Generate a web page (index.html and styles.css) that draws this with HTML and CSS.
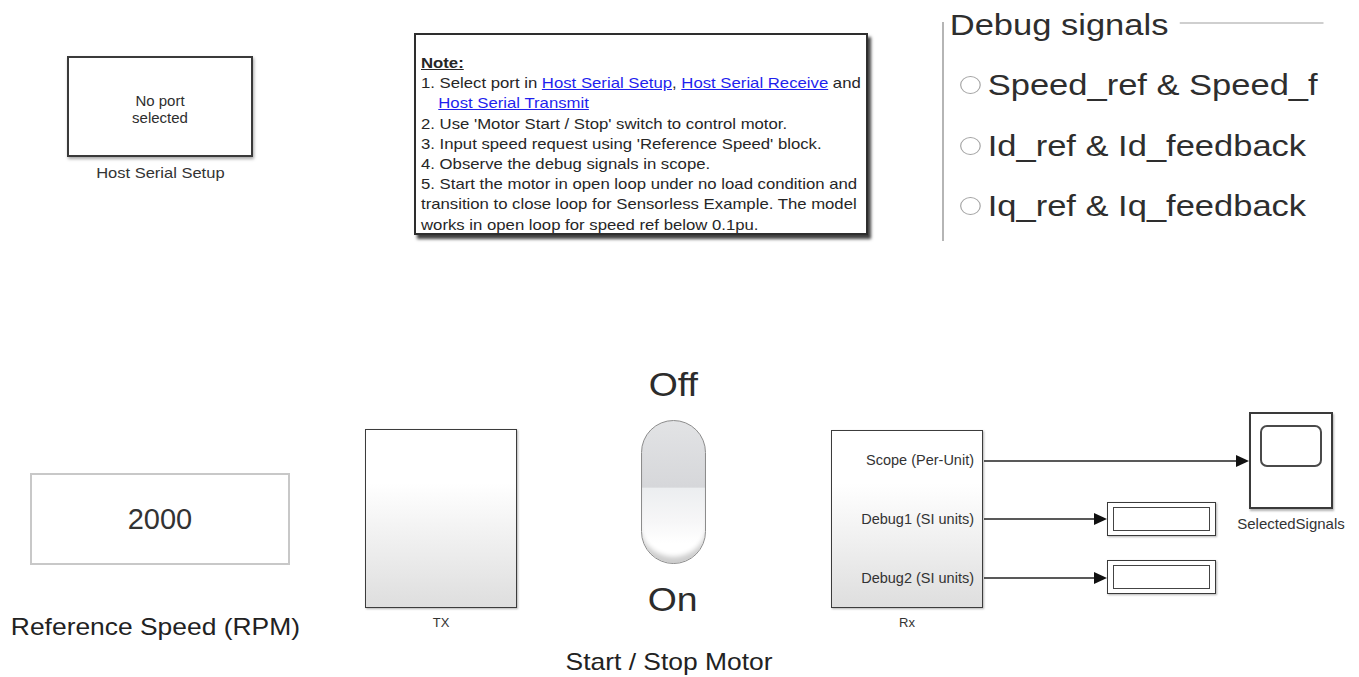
FILE: index.html
```html
<!DOCTYPE html>
<html>
<head>
<meta charset="utf-8">
<title>Host Serial Model</title>
<link rel="stylesheet" href="styles.css">
</head>
<body>
<div class="canvas">

  <div class="node node-hss">
    <div class="block hss-block">
      <div class="hss-text">No port<br>selected</div>
    </div>
    <div class="label lbl-hss"><span class="sx">Host Serial Setup</span></div>
  </div>

  <div class="note">
    <div class="note-text">
      <div class="note-title">Note:</div>
      <div>1. Select port in <a class="lnk">Host Serial Setup</a>, <a class="lnk">Host Serial Receive</a> and</div>
      <div class="indent"><a class="lnk">Host Serial Transmit</a></div>
      <div>2. Use 'Motor Start / Stop' switch to control motor.</div>
      <div>3. Input speed request using 'Reference Speed' block.</div>
      <div>4. Observe the debug signals in scope.</div>
      <div>5. Start the motor in open loop under no load condition and</div>
      <div>transition to close loop for Sensorless Example. The model</div>
      <div>works in open loop for speed ref below 0.1pu.</div>
    </div>
  </div>

  <div class="debug">
    <div class="debug-inner">
      <div class="legend">
        <span class="legend-text">Debug signals</span>
        <span class="legend-line"></span>
      </div>
      <div class="radio first"><span class="radio-dot"></span><span>Speed_ref &amp; Speed_f</span></div>
      <div class="radio"><span class="radio-dot"></span><span>Id_ref &amp; Id_feedback</span></div>
      <div class="radio"><span class="radio-dot"></span><span>Iq_ref &amp; Iq_feedback</span></div>
    </div>
  </div>

  <div class="node node-ref">
    <div class="ref-box"><span class="ref-value">2000</span></div>
    <div class="label lbl-ref"><span class="sx">Reference Speed (RPM)</span></div>
  </div>

  <div class="node node-tx">
    <div class="block sub-block tx-block"></div>
    <div class="label lbl-small">TX</div>
  </div>

  <div class="node node-switch">
    <div class="label lbl-big"><span class="sx">Off</span></div>
    <div class="toggle"></div>
    <div class="label lbl-big lbl-on"><span class="sx">On</span></div>
    <div class="label lbl-start"><span class="sx">Start / Stop Motor</span></div>
  </div>

  <div class="node node-rx">
    <div class="block sub-block rx-block">
      <div class="port">Scope (Per-Unit)</div>
      <div class="port">Debug1 (SI units)</div>
      <div class="port">Debug2 (SI units)</div>
    </div>
    <div class="label lbl-small">Rx</div>
  </div>

  <div class="node node-scope">
    <div class="block scope-block">
      <div class="scope-screen"></div>
    </div>
    <div class="label lbl-scope">SelectedSignals</div>
  </div>

  <div class="display display-1"><div class="display-inner"></div></div>
  <div class="display display-2"><div class="display-inner"></div></div>

  <svg class="wires" width="1359" height="677" viewBox="0 0 1359 677">
    <g stroke="#222" stroke-width="1.3" fill="none">
      <line x1="984" y1="461" x2="1238" y2="461"/>
      <line x1="984" y1="519" x2="1096" y2="519"/>
      <line x1="984" y1="578" x2="1096" y2="578"/>
    </g>
    <g fill="#111">
      <polygon points="1236,455 1249,461 1236,467"/>
      <polygon points="1094,513 1107,519 1094,525"/>
      <polygon points="1094,572 1107,578 1094,584"/>
    </g>
  </svg>

</div>
</body>
</html>
```

FILE: styles.css
```css
html, body {
  margin: 0;
  padding: 0;
  background: #fff;
}

body {
  font-family: "Liberation Sans", Arial, Helvetica, sans-serif;
  color: #2a2a2a;
}

.canvas {
  position: relative;
  width: 1359px;
  height: 677px;
  overflow: hidden;
  background: #fff;
}

/* generic diagram node: block + label stacked */
.node {
  position: absolute;
  display: flex;
  flex-direction: column;
  align-items: center;
}

.label {
  white-space: nowrap;
  line-height: 1;
  color: #333;
}

.sx {
  display: inline-block;
  transform: scaleX(1.1);
  transform-origin: 50% 50%;
}

.block {
  box-sizing: border-box;
  width: 100%;
}

/* Host Serial Setup */
.node-hss {
  left: 67px;
  top: 56px;
  width: 186px;
}

.hss-block {
  height: 101px;
  border: 2px solid #3a3a3a;
  box-shadow: 1px 2px 3px rgba(0, 0, 0, 0.35);
  display: flex;
  align-items: center;
  justify-content: center;
  padding-top: 4px;
}

.hss-text {
  font-size: 15px;
  line-height: 17px;
  text-align: center;
  color: #2e2e2e;
}

.lbl-hss {
  font-size: 15px;
  margin-top: 8px;
}

/* Note */
.note {
  position: absolute;
  left: 414px;
  top: 33px;
  width: 454px;
  height: 202px;
  box-sizing: border-box;
  border: 2px solid #2e2e2e;
  box-shadow: 3px 4px 3px rgba(0, 0, 0, 0.75);
  background: #fff;
  padding: 18px 0 0 5px;
  overflow: visible;
}

.note-text {
  font-size: 15px;
  line-height: 20.2px;
  white-space: nowrap;
  color: #262626;
  transform: scaleX(1.115);
  transform-origin: 0 0;
}

.note-title {
  font-weight: bold;
  text-decoration: underline;
}

.indent {
  padding-left: 15.5px;
}

.lnk {
  color: #1f1fee;
  text-decoration: underline;
}

/* Debug signals panel */
.debug {
  position: absolute;
  left: 942px;
  top: 22px;
  width: 390px;
  height: 219px;
  border-left: 2px solid #b5b5b5;
}

.debug-inner {
  margin-top: -22px;
  width: 330px;
  transform: scaleX(1.15);
  transform-origin: 0 0;
  color: #2e2e2e;
}

.legend {
  display: flex;
  padding-top: 7px;
  padding-left: 5px;
}

.legend-text {
  font-size: 30px;
  line-height: 36px;
  white-space: nowrap;
}

.legend-line {
  flex: 1;
  align-self: flex-start;
  height: 2px;
  margin-top: 15px;
  margin-left: 10px;
  background: #cfcfcf;
}

.radio {
  display: flex;
  align-items: center;
  gap: 6px;
  height: 60.5px;
  padding-left: 13px;
  font-size: 30px;
  white-space: nowrap;
}

.radio.first {
  margin-top: 12px;
}

.radio-dot {
  width: 18px;
  height: 18px;
  margin-left: 1px;
  box-sizing: border-box;
  border: 1.5px solid #a3a3a3;
  border-radius: 50%;
  flex: none;
}

/* Reference speed */
.node-ref {
  left: 30px;
  top: 473px;
  width: 260px;
}

.ref-box {
  box-sizing: border-box;
  width: 100%;
  height: 92px;
  border: 2px solid #c8c8c8;
  display: flex;
  align-items: center;
  justify-content: center;
}

.ref-value {
  font-size: 29px;
  color: #333;
}

.lbl-ref {
  font-size: 24px;
  margin-top: 50px;
  margin-left: -10px;
  color: #222;
}

/* Subsystem blocks */
.sub-block {
  border: 1.5px solid #3c3c3c;
  background: linear-gradient(to bottom, #ffffff 0%, #ffffff 30%, #dedede 100%);
  box-shadow: 1px 1px 2px rgba(0, 0, 0, 0.3);
}

.node-tx {
  left: 365px;
  top: 429px;
  width: 152px;
}

.tx-block {
  height: 179px;
}

.lbl-small {
  font-size: 13px;
  margin-top: 8px;
}

.node-rx {
  left: 831px;
  top: 430px;
  width: 152px;
}

.rx-block {
  height: 178px;
  display: flex;
  flex-direction: column;
}

.port {
  flex: 1;
  display: flex;
  align-items: center;
  justify-content: flex-end;
  padding-right: 8px;
  font-size: 14.5px;
  color: #333;
  white-space: nowrap;
}

/* Switch */
.node-switch {
  left: 573px;
  top: 367px;
  width: 200px;
}

.lbl-big {
  font-size: 34px;
  color: #2c2c2c;
}

.toggle {
  box-sizing: border-box;
  width: 65px;
  height: 144px;
  margin-top: 19px;
  border: 1.5px solid #8c8c8c;
  border-radius: 33px;
  background: linear-gradient(to bottom, #e2e3e5 0%, #d6d7da 46.5%, #eceef0 47.5%, #f6f6f7 70%, #ffffff 86%);
  box-shadow: inset 0 -9px 5px -3px rgba(0, 0, 0, 0.2);
}

.lbl-on {
  margin-top: 17.5px;
}

.lbl-start {
  font-size: 24px;
  margin-top: 34.5px;
  margin-left: -8px;
  color: #222;
}

/* Scope */
.node-scope {
  left: 1249px;
  top: 412px;
  width: 84px;
}

.scope-block {
  position: relative;
  height: 97px;
  border: 2px solid #3a3a3a;
  background: #fff;
  box-shadow: 1px 2px 2px rgba(0, 0, 0, 0.3);
}

.scope-screen {
  position: absolute;
  left: 9px;
  top: 11px;
  width: 62px;
  height: 42px;
  box-sizing: border-box;
  border: 2px solid #4a4a4a;
  border-radius: 7px;
}

.lbl-scope {
  font-size: 15px;
  margin-top: 7px;
}

/* Displays */
.display {
  position: absolute;
  left: 1107px;
  width: 109px;
  height: 34px;
  box-sizing: border-box;
  border: 1.5px solid #3a3a3a;
  background: #fff;
  box-shadow: 1px 1px 2px rgba(0, 0, 0, 0.3);
  padding: 4px 5px;
}

.display-1 {
  top: 502px;
}

.display-2 {
  top: 560px;
}

.display-inner {
  box-sizing: border-box;
  width: 100%;
  height: 100%;
  border: 1.5px solid #444;
}

/* Signal wires */
.wires {
  position: absolute;
  left: 0;
  top: 0;
  pointer-events: none;
}
```
